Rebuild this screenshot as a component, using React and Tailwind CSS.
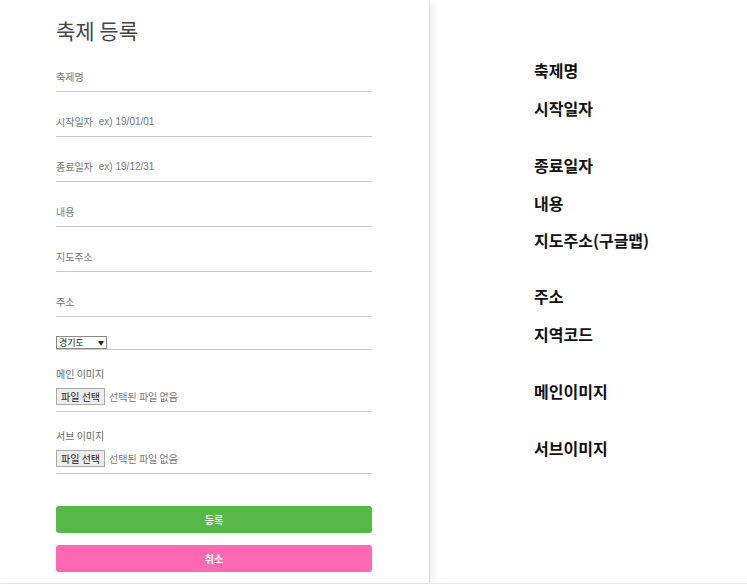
import React from "react";

const fields = [
  { label: "축제명" },
  { label: "시작일자", hint: "ex) 19/01/01" },
  { label: "종료일자", hint: "ex) 19/12/31" },
  { label: "내용" },
  { label: "지도주소" },
  { label: "주소" },
];

const guide = [
  { text: "축제명", mt: "mt-[60px]" },
  { text: "시작일자", mt: "mt-[18px]" },
  { text: "종료일자", mt: "mt-[37px]" },
  { text: "내용", mt: "mt-[18px]" },
  { text: "지도주소(구글맵)", mt: "mt-[17px]" },
  { text: "주소", mt: "mt-[36px]" },
  { text: "지역코드", mt: "mt-[18px]" },
  { text: "메인이미지", mt: "mt-[37px]" },
  { text: "서브이미지", mt: "mt-[37px]" },
];

function FileRow({ label }) {
  return (
    <div className="mt-[18px] border-b border-[#c8c8c8] pb-[6px]">
      <div className="text-[10px] leading-[12px] text-[#666]">{label}</div>
      <div className="mt-[8px] flex items-center gap-[4px]">
        <span className="flex h-[17px] items-center border border-[#a9a9a9] bg-[#ededed] px-[4px] text-[10px] text-[#222]">
          파일 선택
        </span>
        <span className="text-[10px] text-[#777]">선택된 파일 없음</span>
      </div>
    </div>
  );
}

export default function App() {
  return (
    <div
      className="flex h-[584px] w-full border-b border-[#ececec] bg-white"
      style={{ fontFamily: '"Malgun Gothic", "Noto Sans CJK KR", "Liberation Sans", sans-serif' }}
    >
      <section className="relative z-10 flex w-[430px] shrink-0 flex-col border-r border-[#dcdcdc] px-[56px] pt-[16px] shadow-[3px_0_10px_rgba(0,0,0,0.08)]">
        <h1 className="h-[28px] text-[21px] leading-[28px] text-[#444]">축제 등록</h1>
        <div className="w-[316px]">
          <div className="mt-[15px]" />
          {fields.map((f, i) => (
            <div
              key={f.label}
              className={`${i === 0 ? "" : "mt-[12px]"} flex h-[33px] items-center border-b border-[#c8c8c8] pt-[2px] text-[10px] text-[#777]`}
            >
              <span>{f.label}</span>
              {f.hint && (
                <span className="ml-[6px]" style={{ fontFamily: '"Liberation Sans", sans-serif' }}>
                  {f.hint}
                </span>
              )}
            </div>
          ))}
          <div className="mt-[19px] border-b border-[#c8c8c8]">
            <div className="flex h-[13px] w-[51px] items-center justify-between border border-[#888] px-[2px] text-[9px] text-[#222]">
              <span>경기도</span>
              <span className="text-[6px]">▼</span>
            </div>
          </div>
          <FileRow label="메인 이미지" />
          <FileRow label="서브 이미지" />
          <button className="mt-[32px] flex h-[27px] w-full items-center justify-center rounded-[3px] bg-[#56b846] text-[10px] font-bold text-white">
            등록
          </button>
          <button className="mt-[12px] flex h-[27px] w-full items-center justify-center rounded-[3px] bg-[#ff69b4] text-[10px] font-bold text-white">
            취소
          </button>
        </div>
      </section>
      <aside className="flex flex-col pl-[104px]">
        {guide.map((g) => (
          <div key={g.text} className={`${g.mt} text-[16px] font-bold leading-[20px] text-[#111]`}>
            {g.text}
          </div>
        ))}
      </aside>
    </div>
  );
}
